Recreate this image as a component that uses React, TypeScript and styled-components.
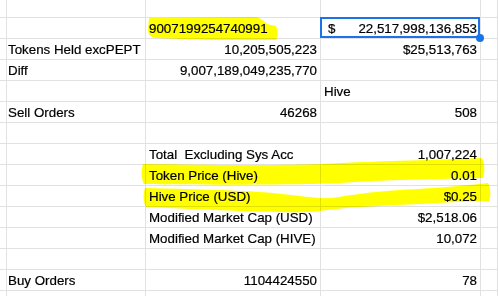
import React from 'react';
import styled, { createGlobalStyle } from 'styled-components';

const Global = createGlobalStyle`
  html, body { margin: 0; padding: 0; background: #fff; }
  body { font-family: "Liberation Sans", Arial, sans-serif; }
`;

const Wrap = styled.div`
  position: relative;
  width: 498px;
  height: 296px;
  overflow: hidden;
  background: #fff;
`;

const Sheet = styled.div`
  display: grid;
  grid-template-columns: 5px 141px 175px 160px 1fr;
  grid-auto-rows: 21px;
  grid-template-rows: 18px;
`;

const Cell = styled.div<{ $align?: 'left' | 'right'; $spread?: boolean; $active?: boolean }>`
  position: relative;
  box-sizing: border-box;
  border-right: 1px solid #e1e1e1;
  border-bottom: 1px solid #e1e1e1;
  padding: 1px 3px 0 3px;
  font-family: "Liberation Sans", Arial, sans-serif;
  font-size: 13.33px;
  line-height: 19px;
  color: #000;
  -webkit-text-stroke: 0.2px #000;
  white-space: pre;
  display: flex;
  justify-content: ${(p) => (p.$spread ? 'space-between' : p.$align === 'right' ? 'flex-end' : 'flex-start')};
  overflow: visible;
  z-index: ${(p) => (p.$active ? 4 : 1)};
`;

const Currency = styled.span`
  padding-left: 4px;
`;

const Selection = styled.div`
  position: absolute;
  top: -1px;
  left: -1px;
  right: 0;
  bottom: 0;
  border: 2px solid #1a73e8;
  pointer-events: none;
`;

const FillHandle = styled.div`
  position: absolute;
  right: -4px;
  bottom: -4px;
  width: 8px;
  height: 8px;
  border-radius: 50%;
  background: #1a73e8;
`;

const Marker = styled.svg`
  position: absolute;
  left: 0;
  top: 0;
  width: 498px;
  height: 296px;
  pointer-events: none;
  mix-blend-mode: multiply;
  z-index: 2;
`;

type C = { t: string; align?: 'left' | 'right'; acct?: boolean; sel?: boolean };
type Row = { a?: C; b?: C; c?: C };

const rows: Row[] = [
  {},
  { b: { t: '9007199254740991' }, c: { t: '22,517,998,136,853', acct: true, sel: true } },
  { a: { t: 'Tokens Held excPEPT' }, b: { t: '10,205,505,223', align: 'right' }, c: { t: '$25,513,763', align: 'right' } },
  { a: { t: 'Diff' }, b: { t: '9,007,189,049,235,770', align: 'right' } },
  { c: { t: 'Hive' } },
  { a: { t: 'Sell Orders' }, b: { t: '46268', align: 'right' }, c: { t: '508', align: 'right' } },
  {},
  { b: { t: 'Total  Excluding Sys Acc' }, c: { t: '1,007,224', align: 'right' } },
  { b: { t: 'Token Price (Hive)' }, c: { t: '0.01', align: 'right' } },
  { b: { t: 'Hive Price (USD)' }, c: { t: '$0.25', align: 'right' } },
  { b: { t: 'Modified Market Cap (USD)' }, c: { t: '$2,518.06', align: 'right' } },
  { b: { t: 'Modified Market Cap (HIVE)' }, c: { t: '10,072', align: 'right' } },
  {},
  { a: { t: 'Buy Orders' }, b: { t: '1104424550', align: 'right' }, c: { t: '78', align: 'right' } },
  {},
];

const renderCell = (c?: C) => {
  if (!c) return <Cell />;
  if (c.acct) {
    return (
      <Cell $spread $active={c.sel}>
        <Currency>$</Currency>
        <span>{c.t}</span>
        {c.sel && (
          <>
            <Selection />
            <FillHandle />
          </>
        )}
      </Cell>
    );
  }
  return <Cell $align={c.align}>{c.t}</Cell>;
};

export default function App() {
  return (
    <>
      <Global />
      <Wrap>
        <Sheet>
          {rows.map((r, i) => (
            <React.Fragment key={i}>
              <Cell />
              {renderCell(r.a)}
              {renderCell(r.b)}
              {renderCell(r.c)}
              <Cell />
            </React.Fragment>
          ))}
        </Sheet>
        <Marker viewBox="0 0 498 296">
          <g fill="#ffff00">
            <path d="M149,18 L256,17 C262,18 265,24 271,25 L276,26 C278,30 278,37 276,40 L210,40 L156,38 C150,37 148,34 148,30 Z" />
            <path d="M143,164 C200,165 300,166 340,163 C380,161 440,160 482,158 C485,165 485,172 483,178 C440,179 380,180 340,183 C300,185 200,185 144,184 C141,178 141,170 143,164 Z" />
            <path d="M145,188 C190,189 230,190 260,192 C290,194 315,199 332,198 C350,195 370,192 400,190 C440,188 470,185 488,183 C491,189 491,196 489,201 C450,202 400,205 360,207 C340,208 330,210 310,212 C270,213 220,210 146,207 C143,201 143,194 145,188 Z" />
          </g>
        </Marker>
      </Wrap>
    </>
  );
}
